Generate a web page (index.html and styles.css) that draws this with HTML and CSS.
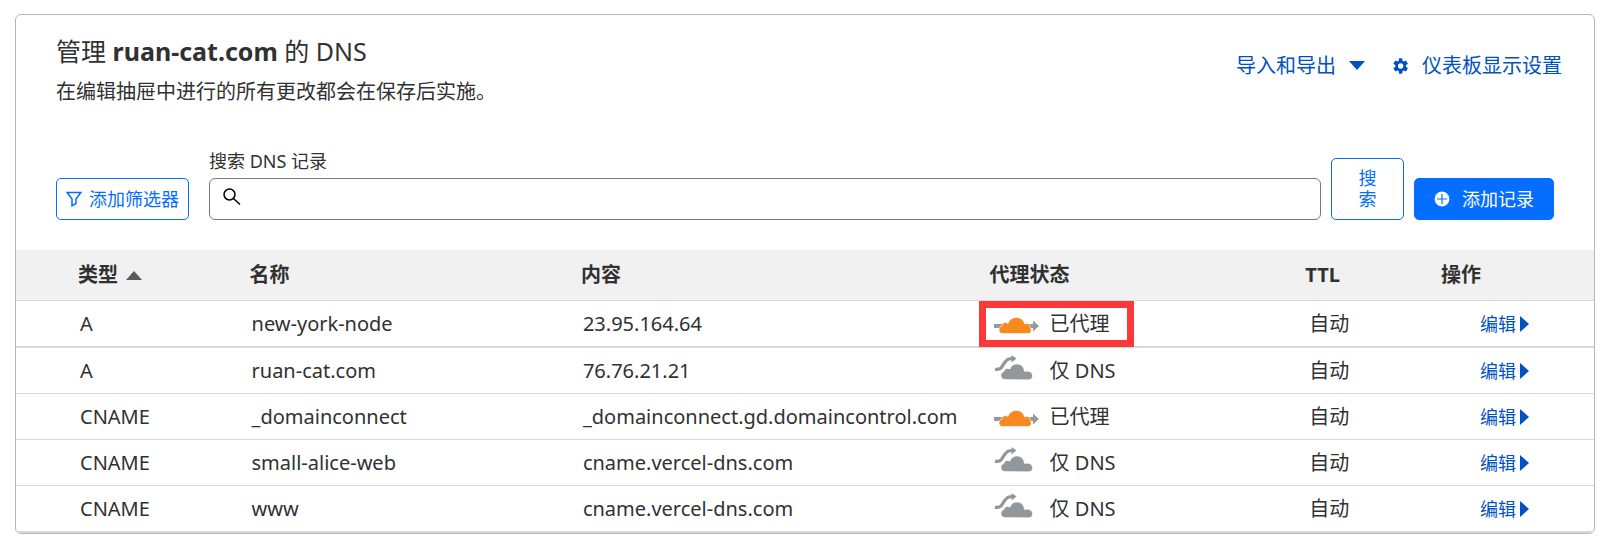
FILE: index.html
```html
<!DOCTYPE html>
<html lang="zh-CN">
<head>
<meta charset="utf-8">
<meta name="viewport" content="width=device-width, initial-scale=1">
<title>DNS</title>
<link rel="stylesheet" href="styles.css">
</head>
<body>
<svg class="defs" aria-hidden="true">
  <symbol id="proxied" viewBox="0 0 46 17">
    <path fill="#999" d="M0 7h10v4H0zM31 7h8V3.500l6 5.500-6 5.500V11h-8z"/>
    <path fill="#f6891f" stroke="#fff" stroke-width=".6" d="M8 16.500c-4-.5-4-6.500 0-7.500 0-3 3-4.500 6-2.500C16 1 20 .5 23 .5c4 0 7 3 7.500 6.500 4-1.500 6 .5 5.500 3.500 2 1.500 1.500 5.500-1 6z"/>
  </symbol>
  <symbol id="dnsonly" viewBox="0 0 40 26">
    <path fill="none" stroke="#92979b" stroke-width="3.200" d="M1 14.300c7 .5 6-2 9.500-6.500C13 4.500 14 3.500 19 3.500"/>
    <path fill="#92979b" d="M17.500 0l5 3.500-5 4z"/>
    <path fill="#92979b" stroke="#fff" stroke-width=".6" d="M11 24.500c-5 0-5.500-7-1-8 .5-3.500 4-3.500 6-2.300C17 10.500 20 9 23 9c4.500 0 7 3.500 7.500 7.500 5-1 8 1 8 4.500 0 2.500-1.500 3.800-4 3.800z"/>
  </symbol>
</svg>

<main class="card">
  <header class="head">
    <div class="intro">
      <h1 class="title">管理 <strong>ruan-cat.com</strong> 的 DNS</h1>
      <p class="desc">在编辑抽屉中进行的所有更改都会在保存后实施。</p>
    </div>
    <div class="links">
      <button class="link" type="button">导入和导出
        <svg class="caret" viewBox="0 0 16 10" aria-hidden="true"><path d="M0 0h16L8 9z"/></svg>
      </button>
      <button class="link" type="button">
        <svg class="gear" viewBox="0 0 24 24" aria-hidden="true"><path d="M19.400 13c.1-.7.1-1.400 0-2l3-2.300-2.900-5-3.500 1.400a8 8 0 0 0-1.700-1L13.800.5H9.200l-.6 3.600a8 8 0 0 0-1.700 1L3.500 3.700l-2.900 5 3 2.300c-.1.700-.1 1.400 0 2l-3 2.300 2.900 5 3.400-1.400a8 8 0 0 0 1.700 1l.6 3.600h4.600l.5-3.600a8 8 0 0 0 1.700-1l3.500 1.400 2.900-5zM11.500 16a4 4 0 1 1 0-8 4 4 0 0 1 0 8z"/></svg>
        仪表板显示设置
      </button>
    </div>
  </header>

  <form class="toolbar">
    <button class="btn filter" type="button">
      <svg class="funnel" viewBox="0 0 16 16" aria-hidden="true"><path d="M1.200 1.500h13.600L10 8v4.500L6 14.800V8z"/></svg>
      添加筛选器
    </button>
    <div class="field">
      <label class="label" for="q">搜索 DNS 记录</label>
      <div class="box">
        <svg class="lens" viewBox="0 0 18 18" aria-hidden="true"><circle cx="6.500" cy="6.500" r="5.500"/><path d="M10.500 10.500l6.500 6"/></svg>
        <input class="input" id="q" type="text">
      </div>
    </div>
    <button class="btn search" type="button">搜索</button>
    <button class="btn add" type="button">
      <svg class="plus" viewBox="0 0 16 16" aria-hidden="true"><circle cx="8" cy="8" r="8"/><path d="M3 8h10M8 3v10"/></svg>
      添加记录
    </button>
  </form>

  <table class="records">
    <colgroup><col class="c-type"><col class="c-name"><col class="c-content"><col class="c-status"><col class="c-ttl"><col class="c-action"></colgroup>
    <thead>
      <tr>
        <th scope="col"><span class="sorted">类型<svg class="sort" viewBox="0 0 16 9" aria-hidden="true"><path d="M8 0l8 9H0z"/></svg></span></th>
        <th scope="col">名称</th><th scope="col">内容</th><th scope="col">代理状态</th><th scope="col">TTL</th><th scope="col">操作</th>
      </tr>
    </thead>
    <tbody>
      <tr class="first">
        <td>A</td><td>new-york-node</td><td>23.95.164.64</td>
        <td><span class="status marked"><svg class="on"><use href="#proxied"/></svg>已代理</span></td>
        <td>自动</td><td><a class="edit" href="#">编辑<svg class="arrow" viewBox="0 0 9 16"><path d="M0 0l9 8-9 8z"/></svg></a></td>
      </tr>
      <tr>
        <td>A</td><td>ruan-cat.com</td><td>76.76.21.21</td>
        <td><span class="status"><svg class="off"><use href="#dnsonly"/></svg>仅 DNS</span></td>
        <td>自动</td><td><a class="edit" href="#">编辑<svg class="arrow" viewBox="0 0 9 16"><path d="M0 0l9 8-9 8z"/></svg></a></td>
      </tr>
      <tr>
        <td>CNAME</td><td>_domainconnect</td><td>_domainconnect.gd.domaincontrol.com</td>
        <td><span class="status"><svg class="on"><use href="#proxied"/></svg>已代理</span></td>
        <td>自动</td><td><a class="edit" href="#">编辑<svg class="arrow" viewBox="0 0 9 16"><path d="M0 0l9 8-9 8z"/></svg></a></td>
      </tr>
      <tr>
        <td>CNAME</td><td>small-alice-web</td><td>cname.vercel-dns.com</td>
        <td><span class="status"><svg class="off"><use href="#dnsonly"/></svg>仅 DNS</span></td>
        <td>自动</td><td><a class="edit" href="#">编辑<svg class="arrow" viewBox="0 0 9 16"><path d="M0 0l9 8-9 8z"/></svg></a></td>
      </tr>
      <tr class="last">
        <td>CNAME</td><td>www</td><td>cname.vercel-dns.com</td>
        <td><span class="status"><svg class="off"><use href="#dnsonly"/></svg>仅 DNS</span></td>
        <td>自动</td><td><a class="edit" href="#">编辑<svg class="arrow" viewBox="0 0 9 16"><path d="M0 0l9 8-9 8z"/></svg></a></td>
      </tr>
    </tbody>
  </table>
</main>
</body>
</html>
```
FILE: styles.css
```css
*, *::after { box-sizing: border-box; }
body {
  margin: 0;
  padding: 14px 18px 5px 15px;
  background: #fff;
  color: #313131;
  font-family: "Noto Sans", "Noto Sans CJK SC", sans-serif;
  font-size: 20px;
  line-height: 28px;
}
button, input { font: inherit; color: inherit; margin: 0; }
svg { flex: none; }
.defs { position: absolute; width: 0; height: 0; }

.card {
  border: 1px solid #b6b7b9;
  border-radius: 6px;
  overflow: hidden;
}
.head {
  display: flex;
  justify-content: space-between;
  align-items: flex-start;
  padding: 18px 32px 0 40px;
}
.title { margin: 0; font-size: 25px; line-height: 36px; font-weight: 400; }
.title strong { font-weight: 700; }
.desc { margin: 9px 0 0; }
.links { display: flex; gap: 28px; padding-top: 19px; }
.link {
  display: flex;
  align-items: center;
  gap: 13px;
  padding: 0;
  border: 0;
  background: none;
  color: #0051c3;
}
.link svg { fill: #0051c3; }
.caret { width: 16px; height: 10px; }
.gear { width: 16px; height: 16px; }

.toolbar {
  display: flex;
  align-items: flex-end;
  gap: 10px;
  padding: 42px 40px 30px;
}
.btn {
  flex: none;
  display: flex;
  align-items: center;
  justify-content: center;
  height: 42px;
  border: 1px solid #056dff;
  border-radius: 5px;
  background: #fff;
  color: #056dff;
  font-size: 18px;
  line-height: 21px;
}
.filter { gap: 7px; width: 133px; padding: 0; margin-right: 10px; }
.funnel { width: 16px; height: 16px; fill: none; stroke: #056dff; stroke-width: 1.500; }
.field { flex: 1; min-width: 0; }
.label { display: block; margin-bottom: 4px; font-size: 18px; line-height: 26px; }
.box {
  display: flex;
  align-items: center;
  height: 42px;
  padding: 0 13px;
  border: 1px solid #797979;
  border-radius: 6px;
}
.lens { width: 18px; height: 18px; margin-bottom: 4px; fill: none; stroke: #000; stroke-width: 1.500; }
.input { flex: 1; min-width: 0; border: 0; outline: 0; padding: 0 8px; background: none; }
.search { width: 73px; height: 62px; padding: 0 26px; }
.add { gap: 12px; width: 140px; padding: 0; background: #056dff; color: #fff; }
.plus { width: 16px; height: 16px; fill: #fff; stroke: #056dff; stroke-width: 1.200; }

.records { width: 100%; table-layout: fixed; border-collapse: separate; border-spacing: 0; }
.c-type { width: 14.800%; }
.c-name { width: 21%; }
.c-content { width: 25.900%; }
.c-status { width: 20%; }
.c-ttl { width: 8.600%; }
th {
  height: 51px;
  padding: 0;
  background: #f1f1f1;
  border-bottom: 1px solid #d9d9d9;
  text-align: left;
  font-weight: 700;
}
td { height: 46px; padding: 0 0 0 2px; border-bottom: 1px solid #d9d9d9; white-space: nowrap; }
.first td { height: 47px; border-bottom-width: 2px; }
.last td { height: 47px; border-bottom-width: 2px; }
th:first-child { padding-left: 62px; }
td:first-child { padding-left: 64px; }
td:nth-child(4), td:nth-child(5) { padding-left: 4px; }
td:last-child { padding-left: 39px; }
.sorted { display: flex; align-items: center; gap: 8px; }
.sort { width: 16px; height: 9px; fill: #595959; }
.status { position: relative; display: flex; align-items: center; }
.on { width: 46px; height: 17px; margin: 3px 10px 0 0; }
.off { width: 40px; height: 26px; margin: 0 16px 6px 0; }
.marked::after {
  content: "";
  position: absolute;
  top: -9px;
  left: -15px;
  width: 155px;
  height: 46px;
  border: 7px solid #fc3838;
}
.edit { display: flex; align-items: center; gap: 4px; color: #0051c3; font-size: 18px; text-decoration: none; }
.arrow { width: 9px; height: 16px; fill: #0051c3; }
```
